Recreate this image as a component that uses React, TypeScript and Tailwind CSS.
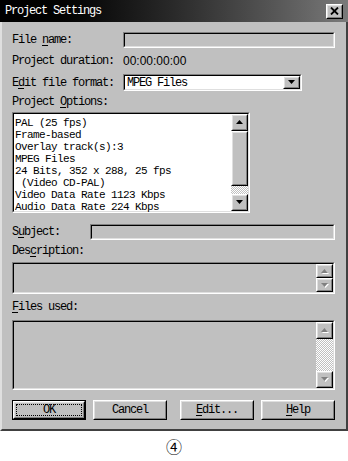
import React from "react";

const mono = "font-['Liberation_Mono',monospace] text-[12px] tracking-[-1.2px] leading-[12px] text-black";
const listText = "font-['Liberation_Mono',monospace] text-[11px] tracking-[-0.6px] leading-[12px] text-black";

function Sunken({ className = "", inner = "", children }: { className?: string; inner?: string; children?: React.ReactNode }) {
  return (
    <div className={`border border-t-[#808080] border-l-[#808080] border-b-white border-r-white ${className}`}>
      <div className={`h-full border border-t-black border-l-black border-b-[#dfdfdf] border-r-[#dfdfdf] ${inner}`}>{children}</div>
    </div>
  );
}

function Raised({ className = "", children }: { className?: string; children?: React.ReactNode }) {
  return (
    <div className={`border border-t-white border-l-white border-b-black border-r-black bg-[#c0c0c0] ${className}`}>
      <div className="h-full border border-t-[#dfdfdf] border-l-[#dfdfdf] border-b-[#808080] border-r-[#808080] flex items-center justify-center">
        {children}
      </div>
    </div>
  );
}

function Arrow({ dir, disabled = false }: { dir: "up" | "down"; disabled?: boolean }) {
  const pts = dir === "up" ? "0,4 3.5,0 7,4" : "0,0 3.5,4 7,0";
  return (
    <svg width="8" height="5" viewBox="0 0 8 5">
      {disabled && <polygon points={pts} transform="translate(1,1)" fill="#ffffff" />}
      <polygon points={pts} fill={disabled ? "#808080" : "#000000"} />
    </svg>
  );
}

const checker = "bg-[repeating-conic-gradient(#ffffff_0%_25%,#c0c0c0_0%_50%)] bg-[length:2px_2px]";

function Label({ children, className = "" }: { children: React.ReactNode; className?: string }) {
  return <span className={`${mono} whitespace-pre ${className}`}>{children}</span>;
}

function U({ children }: { children: React.ReactNode }) {
  return <span className="underline underline-offset-[2px]">{children}</span>;
}

export default function App() {
  const options = [
    "PAL (25 fps)",
    "Frame-based",
    "Overlay track(s):3",
    "MPEG Files",
    "24 Bits, 352 x 288, 25 fps",
    " (Video CD-PAL)",
    "Video Data Rate 1123 Kbps",
    "Audio Data Rate 224 Kbps",
  ];

  return (
    <div className="w-[348px] h-[461px] bg-white flex flex-col">
      <div className="h-[431px] flex flex-col bg-[#c0c0c0]">
        {/* title bar */}
        <div className="h-[22px] flex items-center justify-between pl-[5px] pr-[5px] bg-gradient-to-r from-[#000000] via-[#2a2a2a] to-[#7a7a7a]">
          <span className={`${mono} text-white`}>Project Settings</span>
          <Raised className="w-[17px] h-[15px]">
            <svg width="9" height="8" viewBox="0 0 9 8">
              <path d="M1 0.5 L8 7.5 M8 0.5 L1 7.5" stroke="#000" strokeWidth="1.8" />
            </svg>
          </Raised>
        </div>

        <div className="flex-1 flex flex-col border-l-2 border-l-[#dfdfdf] border-r-2 border-r-[#404040] border-b-2 border-b-[#404040] pl-[10px] pr-[11px]">
          <div className="mt-[10px] h-[16px] flex items-center">
            <Label className="w-[111px]">File <U>n</U>ame:</Label>
            <Sunken className="flex-1 h-full" inner="bg-[#c0c0c0]" />
          </div>

          <div className="h-[26px] flex items-center">
            <Label className="w-[111px]">Project duration:</Label>
            <span className="font-['Liberation_Sans',sans-serif] text-[12px] text-black">00:00:00:00</span>
          </div>

          <div className="h-[17px] flex items-center">
            <Label className="w-[111px]">E<U>d</U>it file format:</Label>
            <Sunken className="w-[179px] h-full" inner="bg-white flex items-center">
              <span className={`${mono} flex-1 pl-[2px]`}>MPEG Files</span>
              <Raised className="w-[17px] h-full">
                <Arrow dir="down" />
              </Raised>
            </Sunken>
          </div>

          <div className="h-[21px] flex items-center">
            <Label>Project <U>O</U>ptions:</Label>
          </div>

          <Sunken className="w-[238px] h-[101px]" inner="bg-white flex">
            <div className="flex-1 flex flex-col pt-[3px] pl-[1px]">
              {options.map((o) => (
                <span key={o} className={`${listText} whitespace-pre`}>{o}</span>
              ))}
            </div>
            <div className="w-[17px] flex flex-col">
              <Raised className="h-[17px]">
                <Arrow dir="up" />
              </Raised>
              <Raised className="h-[55px]" />
              <div className={`flex-1 ${checker}`} />
              <Raised className="h-[17px]">
                <Arrow dir="down" />
              </Raised>
            </div>
          </Sunken>

          <div className="mt-[11px] h-[16px] flex items-center">
            <Label className="w-[78px]">S<U>u</U>bject:</Label>
            <Sunken className="flex-1 h-full" inner="bg-[#c0c0c0]" />
          </div>

          <div className="h-[22px] flex items-center">
            <Label>Des<U>c</U>ription:</Label>
          </div>

          <Sunken className="h-[32px]" inner="bg-[#c0c0c0] flex justify-end">
            <div className="w-[17px] flex flex-col">
              <Raised className="h-[15px]">
                <Arrow dir="up" disabled />
              </Raised>
              <Raised className="h-[15px]">
                <Arrow dir="down" disabled />
              </Raised>
            </div>
          </Sunken>

          <div className="h-[26px] flex items-center">
            <Label><U>F</U>iles used:</Label>
          </div>

          <Sunken className="h-[70px]" inner="bg-[#c0c0c0] flex justify-end">
            <div className="w-[17px] flex flex-col">
              <Raised className="h-[17px]">
                <Arrow dir="up" disabled />
              </Raised>
              <div className={`flex-1 ${checker}`} />
              <Raised className="h-[17px]">
                <Arrow dir="down" disabled />
              </Raised>
            </div>
          </Sunken>

          <div className="mt-[10px] h-[20px] flex justify-between">
            <div className="flex gap-[7px]">
              <div className="w-[74px] h-[20px] border border-black">
                <div className="h-full border border-t-white border-l-white border-b-black border-r-black">
                  <div className="h-full border border-t-[#dfdfdf] border-l-[#dfdfdf] border-b-[#808080] border-r-[#808080] p-[1px]">
                    <div className="h-full border border-dotted border-black flex items-center justify-center">
                      <Label>OK</Label>
                    </div>
                  </div>
                </div>
              </div>
              <Raised className="w-[74px] h-[20px]">
                <Label>Cancel</Label>
              </Raised>
            </div>
            <div className="flex gap-[7px]">
              <Raised className="w-[74px] h-[20px]">
                <Label><U>E</U>dit...</Label>
              </Raised>
              <Raised className="w-[74px] h-[20px]">
                <Label><U>H</U>elp</Label>
              </Raised>
            </div>
          </div>
        </div>
      </div>

      <div className="flex-1 flex items-center justify-center">
        <span className="font-['Noto_Sans_CJK_SC',sans-serif] text-[16px] text-black">④</span>
      </div>
    </div>
  );
}
